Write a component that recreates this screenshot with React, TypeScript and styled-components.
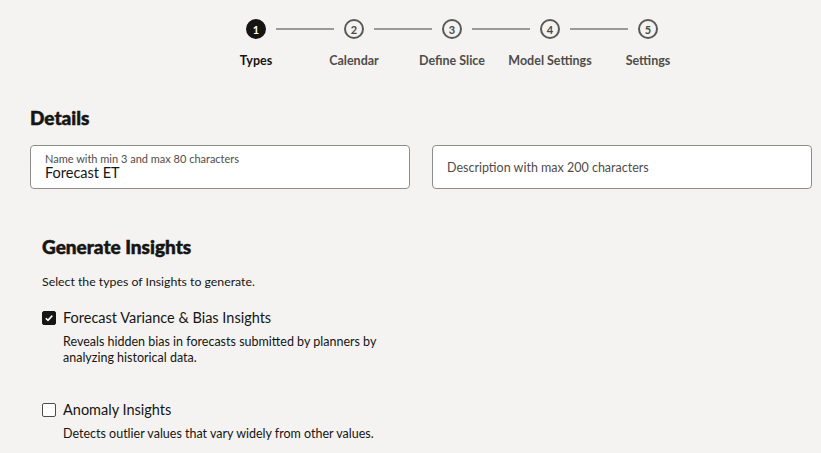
import React from "react";
import styled, { createGlobalStyle } from "styled-components";

const Global = createGlobalStyle`
  html, body { margin: 0; padding: 0; background: #f4f3f1; }
  body { font-family: Lato, "Noto Sans", sans-serif; color: #161513; }
`;

const Page = styled.div`
  width: 821px;
  height: 453px;
  overflow: hidden;
  background: #f4f3f1;
  box-sizing: border-box;
`;

const Stepper = styled.div`
  display: grid;
  grid-template-columns: repeat(5, 98px);
  margin-left: 207px;
  padding-top: 19px;
`;

const Step = styled.div`
  display: flex;
  flex-direction: column;
  align-items: center;
`;

const StepTrack = styled.div`
  display: flex;
  align-items: center;
  width: 100%;
  height: 20px;
`;

const Connector = styled.div<{ $hidden?: boolean }>`
  flex: 1;
  height: 2px;
  background: ${(p) => (p.$hidden ? "transparent" : "#9c9a97")};
`;

const Gap = styled.div`
  width: 10px;
`;

const Circle = styled.div<{ $active?: boolean }>`
  width: 20px;
  height: 20px;
  box-sizing: border-box;
  border-radius: 50%;
  border: 2px solid ${(p) => (p.$active ? "#161513" : "#5b5956")};
  background: ${(p) => (p.$active ? "#161513" : "transparent")};
  color: ${(p) => (p.$active ? "#fff" : "#4a4845")};
  font-size: 11px;
  font-weight: 700;
  display: flex;
  align-items: center;
  justify-content: center;
  line-height: 1;
`;

const StepLabel = styled.div<{ $active?: boolean }>`
  margin-top: 14px;
  font-size: 12.5px;
  font-weight: 700;
  color: ${(p) => (p.$active ? "#161513" : "#4f4d4a")};
  white-space: nowrap;
`;

const Section = styled.div<{ $indent?: number; $top: number }>`
  padding-left: ${(p) => p.$indent ?? 30}px;
  margin-top: ${(p) => p.$top}px;
`;

const Heading = styled.h2`
  margin: 0;
  font-size: 19px;
  font-weight: 900;
  color: #161513;
  line-height: 24px;
  -webkit-text-stroke: 0.5px #161513;
`;

const FieldRow = styled.div`
  display: grid;
  grid-template-columns: 380px 380px;
  gap: 22px;
  margin-top: 15px;
`;

const Field = styled.div`
  height: 44px;
  box-sizing: border-box;
  background: #fff;
  border: 1px solid #8f8d8a;
  border-radius: 4px;
  padding: 0 14px;
  display: flex;
  flex-direction: column;
  justify-content: center;
`;

const FieldLabel = styled.div`
  font-size: 11px;
  line-height: 12px;
  color: #4f4d4a;
`;

const FieldValue = styled.div`
  font-size: 14.5px;
  line-height: 16px;
  color: #161513;
`;

const Placeholder = styled.div`
  font-size: 12.5px;
  color: #4f4d4a;
`;

const Intro = styled.p`
  margin: 15px 0 0;
  font-size: 12.3px;
  line-height: 16px;
  color: #161513;
`;

const Option = styled.div<{ $top: number }>`
  margin-top: ${(p) => p.$top}px;
`;

const OptionHead = styled.label`
  display: flex;
  align-items: center;
  gap: 7px;
`;

const Box = styled.span<{ $checked?: boolean }>`
  width: 14px;
  height: 14px;
  box-sizing: border-box;
  border-radius: 2px;
  border: 1.5px solid ${(p) => (p.$checked ? "#161513" : "#4f4d4a")};
  background: ${(p) => (p.$checked ? "#161513" : "#fff")};
  display: flex;
  align-items: center;
  justify-content: center;
`;

const OptionTitle = styled.span`
  font-size: 14.5px;
  line-height: 18px;
  color: #161513;
`;

const OptionDesc = styled.div`
  margin: 7px 0 0 21px;
  font-size: 12.5px;
  line-height: 16px;
  color: #161513;
  max-width: 330px;
`;

const steps = ["Types", "Calendar", "Define Slice", "Model Settings", "Settings"];

export default function App() {
  return (
    <Page>
      <Global />
      <Stepper>
        {steps.map((s, i) => (
          <Step key={s}>
            <StepTrack>
              <Connector $hidden={i === 0} />
              <Gap />
              <Circle $active={i === 0}>{i + 1}</Circle>
              <Gap />
              <Connector $hidden={i === steps.length - 1} />
            </StepTrack>
            <StepLabel $active={i === 0}>{s}</StepLabel>
          </Step>
        ))}
      </Stepper>
      <Section $top={38}>
        <Heading>Details</Heading>
        <FieldRow>
          <Field>
            <FieldLabel>Name with min 3 and max 80 characters</FieldLabel>
            <FieldValue>Forecast ET</FieldValue>
          </Field>
          <Field>
            <Placeholder>Description with max 200 characters</Placeholder>
          </Field>
        </FieldRow>
      </Section>
      <Section $indent={42} $top={46}>
        <Heading>Generate Insights</Heading>
        <Intro>Select the types of Insights to generate.</Intro>
        <Option $top={19}>
          <OptionHead>
            <Box $checked>
              <svg width="10" height="10" viewBox="0 0 10 10">
                <path d="M1.8 5.2 L4 7.4 L8.3 2.6" fill="none" stroke="#fff" strokeWidth="1.6" />
              </svg>
            </Box>
            <OptionTitle>Forecast Variance &amp; Bias Insights</OptionTitle>
          </OptionHead>
          <OptionDesc>
            Reveals hidden bias in forecasts submitted by planners by analyzing historical data.
          </OptionDesc>
        </Option>
        <Option $top={35}>
          <OptionHead>
            <Box />
            <OptionTitle>Anomaly Insights</OptionTitle>
          </OptionHead>
          <OptionDesc>Detects outlier values that vary widely from other values.</OptionDesc>
        </Option>
      </Section>
    </Page>
  );
}
